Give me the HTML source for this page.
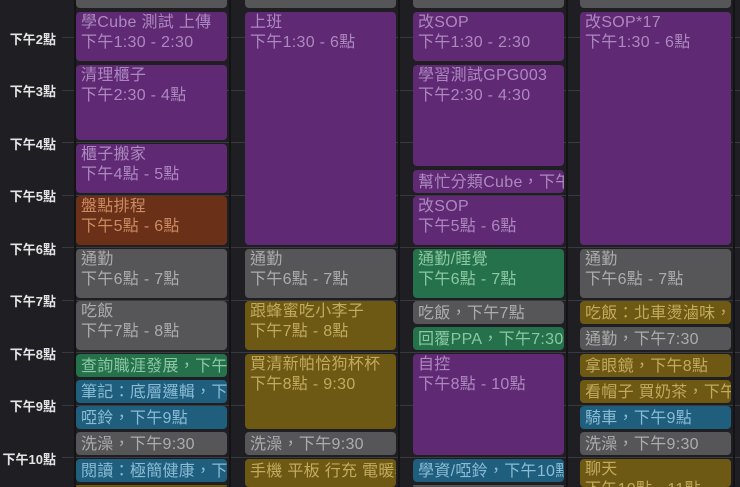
<!DOCTYPE html>
<html><head><meta charset="utf-8"><style>
*{margin:0;padding:0;box-sizing:border-box}
html{width:740px;height:487px;overflow:hidden}
body{width:740px;height:487px;overflow:hidden;background:#1f1f23;position:relative;font-family:"Liberation Sans","Noto Sans CJK TC",sans-serif}
.h{position:absolute;height:1px;background:#3a3a3e}
.t{position:absolute;left:0;width:56px;text-align:right;color:#e4e4e4;font-size:13px;line-height:14px;font-weight:bold}
.v{position:absolute;top:0;width:2px;height:487px;background:#141416}
.e{position:absolute;border-radius:4px;padding:0 5px;font-size:16px;line-height:20px;letter-spacing:0.3px;white-space:nowrap;overflow:hidden}
.e.l{padding-top:1px}
.e.s{line-height:25px}
.p{background:#5f2a73;color:#ad88c0}
.b{background:#6a3018;color:#cc8a62}
.g{background:#565658;color:#acacac}
.gr{background:#24714b;color:#8cc8a2}
.bl{background:#1f5e7c;color:#8abcd6}
.o{background:#6d5913;color:#c2aa5e}
</style></head><body>
<div class="h" style="left:62px;width:678px;top:37px"></div>
<div class="h" style="left:62px;width:678px;top:90px"></div>
<div class="h" style="left:62px;width:678px;top:142px"></div>
<div class="h" style="left:62px;width:678px;top:195px"></div>
<div class="h" style="left:62px;width:678px;top:247px"></div>
<div class="h" style="left:62px;width:678px;top:300px"></div>
<div class="h" style="left:62px;width:678px;top:352px"></div>
<div class="h" style="left:62px;width:678px;top:405px"></div>
<div class="h" style="left:62px;width:678px;top:457px"></div>
<div class="v" style="left:74px"></div>
<div class="v" style="left:229px"></div>
<div class="v" style="left:398px"></div>
<div class="v" style="left:566px"></div>
<div class="v" style="left:733px"></div>
<div class="t" style="top:33px">下午2點</div>
<div class="t" style="top:85px">下午3點</div>
<div class="t" style="top:138px">下午4點</div>
<div class="t" style="top:190px">下午5點</div>
<div class="t" style="top:243px">下午6點</div>
<div class="t" style="top:295px">下午7點</div>
<div class="t" style="top:348px">下午8點</div>
<div class="t" style="top:400px">下午9點</div>
<div class="t" style="top:453px">下午10點</div>

<!-- col1 -->
<div class="e g" style="left:76px;width:151px;top:-20px;height:28px"></div>
<div class="e p l" style="left:76px;width:151px;top:12px;height:49px">學Cube 測試 上傳<br>下午1:30 - 2:30</div>
<div class="e p l" style="left:76px;width:151px;top:65px;height:75px">清理櫃子<br>下午2:30 - 4點</div>
<div class="e p l" style="left:76px;width:151px;top:144px;height:49px">櫃子搬家<br>下午4點 - 5點</div>
<div class="e b l" style="left:76px;width:151px;top:196px;height:49px">盤點排程<br>下午5點 - 6點</div>
<div class="e g l" style="left:76px;width:151px;top:249px;height:49px">通勤<br>下午6點 - 7點</div>
<div class="e g l" style="left:76px;width:151px;top:301px;height:49px">吃飯<br>下午7點 - 8點</div>
<div class="e gr s" style="left:76px;width:151px;top:354px;height:23px">查詢職涯發展，下午</div>
<div class="e bl s" style="left:76px;width:151px;top:380px;height:23px">筆記：底層邏輯，下</div>
<div class="e bl s" style="left:76px;width:151px;top:406px;height:23px">啞鈴，下午9點</div>
<div class="e g s" style="left:76px;width:151px;top:432px;height:23px">洗澡，下午9:30</div>
<div class="e bl s" style="left:76px;width:151px;top:459px;height:23px">閱讀：極簡健康，下</div>
<div class="e o" style="left:76px;width:151px;top:485px;height:2px"></div>

<!-- col2 -->
<div class="e g" style="left:245px;width:151px;top:-20px;height:28px"></div>
<div class="e p l" style="left:245px;width:151px;top:12px;height:233px">上班<br>下午1:30 - 6點</div>
<div class="e g l" style="left:245px;width:151px;top:249px;height:49px">通勤<br>下午6點 - 7點</div>
<div class="e o l" style="left:245px;width:151px;top:301px;height:49px">跟蜂蜜吃小李子<br>下午7點 - 8點</div>
<div class="e o l" style="left:245px;width:151px;top:354px;height:75px">買清新帕恰狗杯杯<br>下午8點 - 9:30</div>
<div class="e g s" style="left:245px;width:151px;top:432px;height:23px">洗澡，下午9:30</div>
<div class="e o s" style="left:245px;width:151px;top:459px;height:28px">手機 平板 行充 電暖器</div>

<!-- col3 -->
<div class="e g" style="left:413px;width:151px;top:-20px;height:28px"></div>
<div class="e p l" style="left:413px;width:151px;top:12px;height:49px">改SOP<br>下午1:30 - 2:30</div>
<div class="e p l" style="left:413px;width:151px;top:65px;height:101px">學習測試GPG003<br>下午2:30 - 4:30</div>
<div class="e p s" style="left:413px;width:151px;top:170px;height:23px">幫忙分類Cube，下午</div>
<div class="e p l" style="left:413px;width:151px;top:196px;height:49px">改SOP<br>下午5點 - 6點</div>
<div class="e gr l" style="left:413px;width:151px;top:249px;height:49px">通勤/睡覺<br>下午6點 - 7點</div>
<div class="e g s" style="left:413px;width:151px;top:301px;height:23px">吃飯，下午7點</div>
<div class="e gr s" style="left:413px;width:151px;top:327px;height:23px">回覆PPA，下午7:30</div>
<div class="e p l" style="left:413px;width:151px;top:354px;height:101px">自控<br>下午8點 - 10點</div>
<div class="e bl s" style="left:413px;width:151px;top:459px;height:23px">學資/啞鈴，下午10點</div>
<div class="e g" style="left:413px;width:151px;top:485px;height:2px"></div>

<!-- col4 -->
<div class="e g" style="left:580px;width:151px;top:-20px;height:28px"></div>
<div class="e p l" style="left:580px;width:151px;top:12px;height:233px">改SOP*17<br>下午1:30 - 6點</div>
<div class="e g l" style="left:580px;width:151px;top:249px;height:49px">通勤<br>下午6點 - 7點</div>
<div class="e o s" style="left:580px;width:151px;top:301px;height:23px">吃飯：北車燙滷味，</div>
<div class="e g s" style="left:580px;width:151px;top:327px;height:23px">通勤，下午7:30</div>
<div class="e o s" style="left:580px;width:151px;top:354px;height:23px">拿眼鏡，下午8點</div>
<div class="e o s" style="left:580px;width:151px;top:380px;height:23px">看帽子 買奶茶，下午</div>
<div class="e bl s" style="left:580px;width:151px;top:406px;height:23px">騎車，下午9點</div>
<div class="e g s" style="left:580px;width:151px;top:432px;height:23px">洗澡，下午9:30</div>
<div class="e o l" style="left:580px;width:151px;top:459px;height:28px">聊天<br>下午10點 - 11點</div>
</body></html>
